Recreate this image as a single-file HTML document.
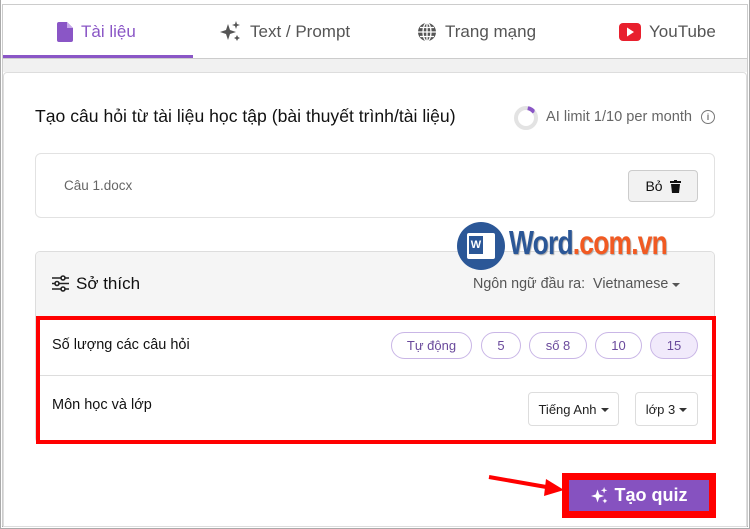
<!DOCTYPE html>
<html><head><meta charset="utf-8">
<style>
*{box-sizing:border-box;margin:0;padding:0}
body{width:750px;height:529px;overflow:hidden;background:#fff;font-family:"Liberation Sans","DejaVu Sans",sans-serif;position:relative;color:#222}
.abs{position:absolute}
.tab{position:absolute;top:20px;font-size:17px;color:#555;display:flex;align-items:center;gap:8px;height:24px}
.pill{position:absolute;top:332px;height:27px;border:1px solid #c9b6e6;border-radius:14px;font-size:13px;color:#6a4a9c;display:flex;align-items:center;justify-content:center}
.sel{position:absolute;top:392px;height:34px;border:1px solid #ddd;border-radius:4px;font-size:13px;color:#222;display:flex;align-items:center;justify-content:center;gap:4px}
.caret{display:inline-block;border-left:4px solid transparent;border-right:4px solid transparent;border-top:4px solid #333;margin-top:2px}
</style></head><body>
<div class="abs" style="left:0;top:0;width:750px;height:529px;border:1px solid #aaa;border-top:none"></div>
<div class="abs" style="left:2px;top:4px;width:746px;height:1px;background:#ccc"></div>
<div class="abs" style="left:2px;top:4px;width:1px;height:523px;background:#ccc"></div>
<div class="abs" style="left:747px;top:4px;width:1px;height:523px;background:#ccc"></div>
<div class="abs" style="left:2px;top:526px;width:746px;height:1px;background:#aaa"></div>
<div class="tab" style="left:57px;color:#8a56c6">
<svg width="16" height="20" viewBox="0 0 16 20"><path d="M2 0h8l6 6v12a2 2 0 0 1-2 2H2a2 2 0 0 1-2-2V2a2 2 0 0 1 2-2z" fill="#8a56c6"/><path d="M10 0v6h6z" fill="#c7a9ea"/></svg>Tài liệu</div>
<div class="tab" style="left:220px"><svg width="22" height="22" viewBox="0 0 22 22" fill="#555"><path d="M8 3l2 6 6 2-6 2-2 6-2-6-6-2 6-2z"/><path d="M16 0l1 3 3 1-3 1-1 3-1-3-3-1 3-1z"/><path d="M17 14l1 2 2 1-2 1-1 2-1-2-2-1 2-1z"/></svg>Text / Prompt</div>
<div class="tab" style="left:417px"><svg width="20" height="20" viewBox="0 0 20 20"><circle cx="10" cy="10" r="9" fill="#555"/><path d="M1 10h18M10 1v18M3 5.5h14M3 14.5h14" stroke="#fff" stroke-width="1.3"/><ellipse cx="10" cy="10" rx="4" ry="9" fill="none" stroke="#fff" stroke-width="1.3"/></svg>Trang mạng</div>
<div class="tab" style="left:619px"><svg width="22" height="18" viewBox="0 0 22 18"><rect width="22" height="18" rx="4" fill="#e8202e"/><path d="M8 4.5l7 4.5-7 4.5z" fill="#fff"/></svg>YouTube</div>
<div class="abs" style="left:3px;top:55px;width:190px;height:4px;background:#8a56c6"></div>
<div class="abs" style="left:3px;top:58px;width:744px;height:1px;background:#ccc"></div>
<div class="abs" style="left:3px;top:59px;width:744px;height:13px;background:#f1f1f1"></div>
<div class="abs" style="left:3px;top:72px;width:744px;height:455px;background:#fff;border:1px solid #ddd;border-radius:4px 4px 0 0"></div>
<div class="abs" style="left:35px;top:106px;font-size:17.6px;color:#111">Tạo câu hỏi từ tài liệu học tập (bài thuyết trình/tài liệu)</div>
<div class="abs" style="left:514px;top:106px;width:24px;height:24px;border-radius:50%;border:4px solid #e3e3e3"></div>
<div class="abs" style="left:514px;top:106px;width:24px;height:24px;border-radius:50%;border:4px solid transparent;border-top-color:#8a56c6;transform:rotate(10deg);clip-path:polygon(50% 0,80% 0,80% 50%,50% 50%)"></div>
<div class="abs" style="left:546px;top:109px;font-size:14.6px;color:#666">AI limit 1/10 per month</div>
<div class="abs" style="left:701px;top:110px;width:14px;height:14px;border:1.3px solid #777;border-radius:50%;font-size:9px;color:#777;text-align:center;line-height:12px;font-weight:bold">i</div>
<div class="abs" style="left:35px;top:153px;width:680px;height:65px;border:1px solid #e2e2e2;border-radius:6px"></div>
<div class="abs" style="left:64px;top:178px;font-size:13.5px;color:#666">Câu 1.docx</div>
<div class="abs" style="left:628px;top:170px;width:70px;height:32px;background:#f2f2f2;border:1px solid #ccc;border-radius:4px;display:flex;align-items:center;justify-content:center;gap:7px;font-size:14px;color:#111">Bỏ<svg width="11" height="13" viewBox="0 0 11 13"><rect x="0" y="1" width="11" height="2" fill="#111"/><rect x="4" y="0" width="3" height="2" fill="#111"/><path d="M1 4h9l-1 9H2z" fill="#111"/></svg></div>
<div class="abs" style="left:35px;top:251px;width:680px;height:192px;border:1px solid #ddd;border-radius:5px;overflow:hidden"><div style="height:66px;background:#f5f5f5;border-bottom:1px solid #ddd"></div></div>
<svg class="abs" style="left:52px;top:275px" width="17" height="17" viewBox="0 0 17 17" stroke="#222" stroke-width="1.6" fill="#fff"><path d="M0 3h17M0 8.5h17M0 14h17"/><circle cx="11" cy="3" r="2"/><circle cx="5" cy="8.5" r="2"/><circle cx="11" cy="14" r="2"/></svg>
<div class="abs" style="left:76px;top:274px;font-size:17px;color:#111">Sở thích</div>
<div class="abs" style="left:473px;top:276px;font-size:14.3px;color:#555">Ngôn ngữ đầu ra:&nbsp; Vietnamese <span class="caret" style="border-top-color:#555;vertical-align:middle"></span></div>
<div class="abs" style="left:457px;top:222px;width:48px;height:48px;border-radius:50%;background:#2b5797"></div>
<div class="abs" style="left:467px;top:233px;width:28px;height:26px;background:#fff;border-radius:2px"></div>
<div class="abs" style="left:469px;top:236px;width:14px;height:18px;background:#2b5797;color:#fff;font-size:11px;font-weight:bold;text-align:center;line-height:18px">W</div>
<div class="abs" style="left:509px;top:224px;font-size:33px;font-weight:bold;color:#2b5797;letter-spacing:-1px;transform:scaleX(0.8);transform-origin:left;text-shadow:1px 1px 1px #aaa">Word<span style="color:#f15a22">.com.vn</span></div>
<div class="abs" style="left:38px;top:375px;width:676px;height:1px;background:#ddd"></div>
<div class="abs" style="left:52px;top:337px;font-size:14.5px;color:#111">Số lượng các câu hỏi</div>
<div class="abs" style="left:52px;top:397px;font-size:14.5px;color:#111">Môn học và lớp</div>
<div class="pill" style="left:391px;width:81px">Tự động</div>
<div class="pill" style="left:481px;width:40px">5</div>
<div class="pill" style="left:529px;width:58px">số 8</div>
<div class="pill" style="left:595px;width:47px">10</div>
<div class="pill" style="left:650px;width:48px;background:#f1eafb">15</div>
<div class="sel" style="left:528px;width:91px">Tiếng Anh <span class="caret"></span></div>
<div class="sel" style="left:635px;width:63px">lớp 3 <span class="caret"></span></div>
<div class="abs" style="left:36px;top:316px;width:680px;height:128px;border:4px solid #f00"></div>
<div class="abs" style="left:562px;top:473px;width:154px;height:45px;border:4px solid #f00;background:#8652c0"></div>
<div class="abs" style="left:566px;top:477px;width:146px;height:37px;border:3px solid #f00;display:flex;align-items:center;justify-content:center;gap:6px;color:#fff;font-size:18px;font-weight:bold">
<svg width="18" height="18" viewBox="0 0 22 22" fill="#fff"><path d="M8 3l2 6 6 2-6 2-2 6-2-6-6-2 6-2z"/><path d="M16 0l1 3 3 1-3 1-1 3-1-3-3-1 3-1z"/><path d="M17 14l1 2 2 1-2 1-1 2-1-2-2-1 2-1z"/></svg>Tạo quiz</div>
<svg class="abs" style="left:486px;top:472px" width="80" height="26" viewBox="0 0 80 26"><path d="M3 5L66 16" stroke="#f00" stroke-width="4"/><path d="M78 18L60 7 58 24z" fill="#f00"/></svg>
</body></html>
